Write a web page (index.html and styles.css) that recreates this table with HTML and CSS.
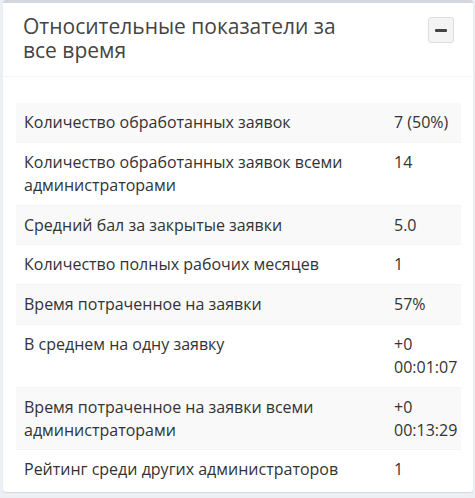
FILE: index.html
```html
<!DOCTYPE html>
<html lang="ru">
<head>
<meta charset="utf-8">
<link rel="stylesheet" href="styles.css">
</head>
<body>
<div class="box">
  <div class="box-header">
    <h3 class="box-title">Относительные показатели за все время</h3>
    <button class="btn-tool" type="button" aria-label="Свернуть"><span class="minus"></span></button>
  </div>
  <div class="box-body">
    <table class="stats">
      <colgroup><col class="c-label"><col class="c-value"></colgroup>
      <tbody>
        <tr><td>Количество обработанных заявок</td><td>7 (50%)</td></tr>
        <tr><td>Количество обработанных заявок всеми администраторами</td><td>14</td></tr>
        <tr><td>Средний бал за закрытые заявки</td><td>5.0</td></tr>
        <tr><td>Количество полных рабочих месяцев</td><td>1</td></tr>
        <tr><td>Время потраченное на заявки</td><td>57%</td></tr>
        <tr><td>В среднем на одну заявку</td><td>+0 00:01:07</td></tr>
        <tr><td>Время потраченное на заявки всеми администраторами</td><td>+0 00:13:29</td></tr>
        <tr><td>Рейтинг среди других администраторов</td><td>1</td></tr>
      </tbody>
    </table>
  </div>
</div>
</body>
</html>
```
FILE: styles.css
```css
html, body {
  margin: 0;
  padding: 0;
}
body {
  background: #ecf0f5;
  padding: 0 2px 3px 3px;
  font-family: "Open Sans", "Liberation Sans", Arial, sans-serif;
  color: #333;
}
.box {
  background: #fff;
  border-top: 3px solid #d2d6de;
  border-radius: 3px;
  box-shadow: 0 1px 1px rgba(0,0,0,0.1);
  height: 492px;
  box-sizing: border-box;
}
.box-header {
  display: flex;
  justify-content: space-between;
  align-items: flex-start;
  padding: 11px 19px 14px 20px;
  border-bottom: 1px solid #f4f4f4;
}
.box-title {
  margin: 0;
  max-width: 330px;
  font-size: 21px;
  line-height: 24px;
  font-weight: normal;
  color: #444;
}
.btn-tool {
  width: 26px;
  height: 26px;
  margin-top: 3px;
  padding: 0;
  background: #f4f4f4;
  border: 1px solid #ddd;
  border-radius: 3px;
  display: flex;
  align-items: center;
  justify-content: center;
}
.minus {
  display: block;
  width: 12px;
  height: 3px;
  background: #444;
  border-radius: 1px;
}
.box-body {
  padding: 26px 12px 0 13px;
}
.stats {
  width: 100%;
  border-collapse: collapse;
  table-layout: fixed;
  font-size: 16px;
  line-height: 1.42857;
}
.c-label { width: 370px; }
.c-value { width: 75px; }
.stats td {
  padding: 8px;
  border-top: 1px solid #f4f4f4;
  vertical-align: top;
}
.stats tr:first-child td { border-top: 0; }
.stats tr:nth-child(odd) td { background: #f9f9f9; }
```
